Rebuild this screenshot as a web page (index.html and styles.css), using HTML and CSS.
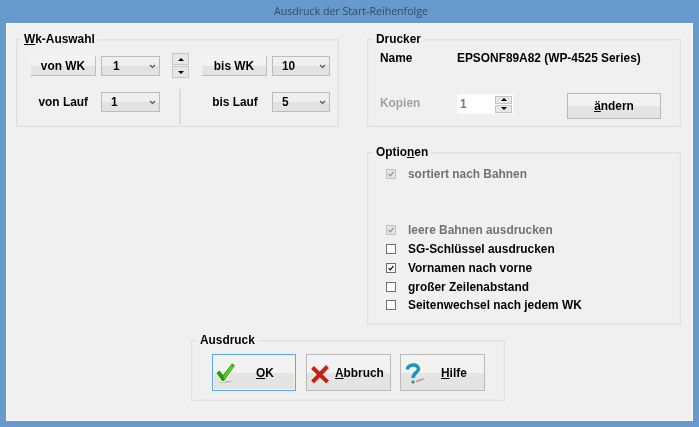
FILE: index.html
```html
<!DOCTYPE html>
<html lang="de">
<head>
<meta charset="utf-8">
<title>Ausdruck der Start-Reihenfolge</title>
<link rel="stylesheet" href="styles.css">
</head>
<body>
<div class="window">
  <div class="titlebar">Ausdruck der Start-Reihenfolge</div>
  <div class="client">
    <div class="top-row">
      <section class="group group-wk">
        <div class="legend legend-wk"><u>W</u>k-Auswahl</div>
        <div class="wk-grid">
          <button class="btn btn-small">von WK</button>
          <div class="select select-a"><span>1</span><svg class="chev" viewBox="0 0 7 5"><path d="M1 1l2.500 2.500L6 1"/></svg></div>
          <div class="spin spin-big">
            <div class="spin-btn"><i class="up"></i></div>
            <div class="spin-btn"><i class="down"></i></div>
          </div>
          <button class="btn btn-small">bis WK</button>
          <div class="select select-b"><span>10</span><svg class="chev" viewBox="0 0 7 5"><path d="M1 1l2.500 2.500L6 1"/></svg></div>

          <div class="field-label label-right">von Lauf</div>
          <div class="select select-a"><span class="tight">1</span><svg class="chev" viewBox="0 0 7 5"><path d="M1 1l2.500 2.500L6 1"/></svg></div>
          <div class="separator"></div>
          <div class="field-label label-center">bis Lauf</div>
          <div class="select select-b"><span>5</span><svg class="chev" viewBox="0 0 7 5"><path d="M1 1l2.500 2.500L6 1"/></svg></div>
        </div>
      </section>
      <section class="group group-printer">
        <div class="legend">Drucker</div>
        <div class="printer-grid">
          <div class="printer-key">Name</div>
          <div class="printer-name">EPSONF89A82 (WP-4525 Series)</div>
          <div class="copies-label">Kopien</div>
          <div class="copies-input">
            <span>1</span>
            <div class="spin spin-small">
              <div class="spin-btn"><i class="up"></i></div>
              <div class="spin-btn"><i class="down"></i></div>
            </div>
          </div>
          <button class="btn btn-change"><u>ä</u>ndern</button>
        </div>
      </section>
    </div>
    <div class="options-row">
      <section class="group group-options">
        <div class="legend">Optio<u>n</u>en</div>
        <div class="option-list">
          <div class="option disabled"><span class="box checked"><svg viewBox="0 0 9 9"><path d="M1.800 4.600l2 2 3.400-4.400"/></svg></span>sortiert nach Bahnen</div>
          <div class="option-gap"></div>
          <div class="option disabled"><span class="box checked"><svg viewBox="0 0 9 9"><path d="M1.800 4.600l2 2 3.400-4.400"/></svg></span>leere Bahnen ausdrucken</div>
          <div class="option"><span class="box"></span>SG-Schlüssel ausdrucken</div>
          <div class="option"><span class="box checked"><svg viewBox="0 0 9 9"><path d="M1.800 4.600l2 2 3.400-4.400"/></svg></span>Vornamen nach vorne</div>
          <div class="option"><span class="box"></span>großer Zeilenabstand</div>
          <div class="option"><span class="box"></span>Seitenwechsel nach jedem WK</div>
        </div>
      </section>
    </div>
    <section class="group group-print">
      <div class="legend">Ausdruck</div>
      <div class="print-buttons">
        <button class="btn btn-big focus">
          <svg class="icon" viewBox="0 0 26 24"><path class="shadow" d="M3 21l9-2 6 0-9 2z"/><path class="halo" d="M1 11l3.500-3 3.500 4.500 9-11.500 4 2.500-11.500 16.500h-2.500z"/><path fill="#1f9c1f" d="M1.500 11l3-2.500 3.500 4.500 9-11.500 3 2-11 15.500h-2z"/><path fill="#5cc43a" d="M16.500 3l2.500 1.500-9.500 12.500-1-3z"/></svg>
          <span class="label label-ok"><u>O</u>K</span>
        </button>
        <button class="btn btn-big">
          <svg class="icon" viewBox="0 0 26 24"><path class="x-halo" d="M3.500 5.500L18.500 20M18.500 4.500L3.500 20"/><path class="x" d="M3.500 5.500L18.500 20M18.500 4.500L3.500 20"/></svg>
          <span class="label label-cancel"><u>A</u>bbruch</span>
        </button>
        <button class="btn btn-big">
          <svg class="icon icon-help" viewBox="0 0 26 24"><path class="shadow" d="M12 19l8-3 2 1-8 3.500z"/><path class="q-halo" d="M4.500 7.500C4.500 1.500 15.500 1.500 15.500 7C15.500 10.500 10 11 10 16"/><path class="q" d="M4.500 7.500C4.500 1.500 15.500 1.500 15.500 7C15.500 10.500 10 11 10 16"/><circle cx="10" cy="20" r="2.200" fill="#1396d8" stroke="#fff2a0"/></svg>
          <span class="label label-help"><u>H</u>ilfe</span>
        </button>
      </div>
    </section>
  </div>
</div>
</body>
</html>
```

FILE: styles.css
```css
* { box-sizing: border-box; }
html, body { margin: 0; padding: 0; }
body {
  width: 699px;
  height: 427px;
  overflow: hidden;
  font-family: "Liberation Sans", Arial, sans-serif;
  font-size: 11.9px;
  font-weight: 700;
  color: #000;
}
.window {
  width: 699px;
  height: 427px;
  background: #6699cc;
  padding: 0 6px 6px;
  display: flex;
  flex-direction: column;
  filter: blur(0.3px);
}
.titlebar {
  height: 23px;
  line-height: 23px;
  text-align: center;
  font-family: "Open Sans", sans-serif;
  font-size: 10.6px;
  font-weight: 400;
  color: #2f4a66;
  padding-left: 3px;
}
.client {
  flex: 1;
  background: #f0f0f0;
  border: 1px solid #fafafa;
  padding: 15px 0 0 9px;
  display: flex;
  flex-direction: column;
}
.top-row { display: flex; gap: 28px; }
.group {
  border: 1px solid #e0e0e0;
  box-shadow: inset 0 0 0 1px #ebebeb;
}
.legend {
  width: fit-content;
  margin: -8px 0 0 5px;
  padding: 0 3px;
  height: 15px;
  line-height: 15px;
  background: #f0f0f0;
  text-shadow: 0 0 1px #fff;
}
.legend-wk { margin-left: 4px; }
.group-wk { width: 323px; height: 88px; }
.group-printer { width: 314px; height: 88px; }
.wk-grid {
  display: grid;
  grid-template-columns: 66px 59px 31px 66px 58px;
  grid-template-rows: 25px 35px;
  column-gap: 5px;
  row-gap: 11px;
  margin: 6px 0 0 13px;
  align-items: start;
}
.spin-big { margin: 0 7px; width: 17px; }
.wk-grid .btn-small, .wk-grid .select { margin-top: 3px; }
.btn {
  font: inherit;
  color: #000;
  padding: 0;
  border: 1px solid #cfcfcf;
  background: linear-gradient(#f2f2f2 0, #f2f2f2 50%, #e4e4e4 50%, #e4e4e4 100%);
  text-shadow: 0 0 1px #fff;
}
.btn-small {
  height: 20px;
  border-color: #f5f5f5 #bdbdbd #bdbdbd #f5f5f5;
}
.select {
  height: 20px;
  border: 1px solid #bcbcbc;
  background: linear-gradient(#efefef 0, #efefef 50%, #e2e2e2 50%, #e2e2e2 100%);
  display: flex;
  align-items: center;
  justify-content: space-between;
  padding: 0 3px 0 11px;
  text-shadow: 0 0 1px #fff;
}
.select .tight { margin-left: -2px; }
.select-b { padding-left: 9px; }
.chev { width: 7px; height: 5px; }
.chev path { fill: none; stroke: #555; stroke-width: 1.2; }
.spin { display: flex; flex-direction: column; }
.spin-big { height: 25px; gap: 1px; }
.spin-btn {
  flex: 1;
  background: #e7e7e7;
  border: 1px solid #c6c6c6;
  display: flex;
  align-items: center;
  justify-content: center;
}
.spin-btn i { width: 0; height: 0; border-left: 3px solid transparent; border-right: 3px solid transparent; }
.spin-btn .up { border-bottom: 3px solid #000; }
.spin-btn .down { border-top: 3px solid #000; }
.field-label {
  height: 20px;
  line-height: 20px;
  margin-top: 3px;
  text-shadow: 0 0 1px #fff;
}
.label-right { text-align: right; padding-right: 8px; }
.label-center { text-align: center; margin-left: 2px; }
.separator {
  width: 2px;
  height: 35px;
  background: #dcdcdc;
  margin-left: 14px;
}
.printer-grid {
  display: grid;
  grid-template-columns: 77px 110px 94px;
  grid-template-rows: 22px 26px;
  row-gap: 24px;
  margin: 0 0 0 12px;
  align-items: center;
}
.printer-name { grid-column: 2 / 4; white-space: nowrap; }
.copies-label { color: #a0a0a0; text-shadow: 0 0 1px #fff; align-self: start; line-height: 20px; }
.copies-input {
  width: 57px;
  height: 20px;
  background: #fff;
  border: 1px solid #f7f7f7;
  display: flex;
  justify-content: space-between;
  align-items: center;
  padding: 0 1px 0 2px;
  color: #777;
  align-self: start;
  margin-top: 1px;
}
.spin-small { width: 17px; height: 17px; gap: 1px; }
.btn-change {
  width: 94px;
  height: 26px;
  border: 1px solid #b8b8b8;
}
.options-row { margin: 25px 0 0 351px; }
.group-options { width: 314px; height: 173px; }
.option-list {
  margin: 5px 0 0 18px;
  display: flex;
  flex-direction: column;
}
.option {
  height: 18.800px;
  display: flex;
  align-items: center;
  gap: 12px;
  text-shadow: 0 0 1px #fff;
}
.option-gap { height: 37px; }
.option.disabled { color: #707070; }
.box {
  width: 10px;
  height: 10px;
  flex: none;
  background: #fff;
  border: 1px solid #6f6f6f;
  display: flex;
}
.box svg { width: 8px; height: 8px; }
.box path { fill: none; stroke: #000; stroke-width: 1.300; }
.disabled .box { background: #e2e2e2; border-color: #c2c2c2; }
.disabled .box path { stroke: #8a8a8a; }
.group-print {
  width: 314px;
  height: 61px;
  margin: 15px 0 0 175px;
}
.print-buttons {
  display: flex;
  margin: 6px 0 0 20px;
  gap: 10px;
}
.btn-big {
  width: 85px;
  height: 37px;
  display: flex;
  align-items: center;
  padding: 0 0 0 2px;
  border: 1px solid #bababa;
}
.btn-big.focus { border-color: #5aa9ec; box-shadow: inset 0 0 0 1px #f5f5e0; width: 84px; }
.print-buttons .btn-big:nth-child(3) { margin-left: -1px; }
.icon { width: 26px; height: 24px; flex: none; margin-top: 2px; }
.halo { fill: #fff6c0; stroke: #fff6c0; stroke-width: 1; }
.shadow { fill: #a8a8a8; }
.x { fill: none; stroke: #c4201c; stroke-width: 4; }
.x-halo { fill: none; stroke: #fff6c0; stroke-width: 6; }
.q { fill: none; stroke: #1396d8; stroke-width: 3.500; }
.q-halo { fill: none; stroke: #fff2a0; stroke-width: 5.500; }
.label { flex: 1; text-align: left; }
.label-ok { padding-left: 15px; }
.label-help { padding-left: 12px; }
```
